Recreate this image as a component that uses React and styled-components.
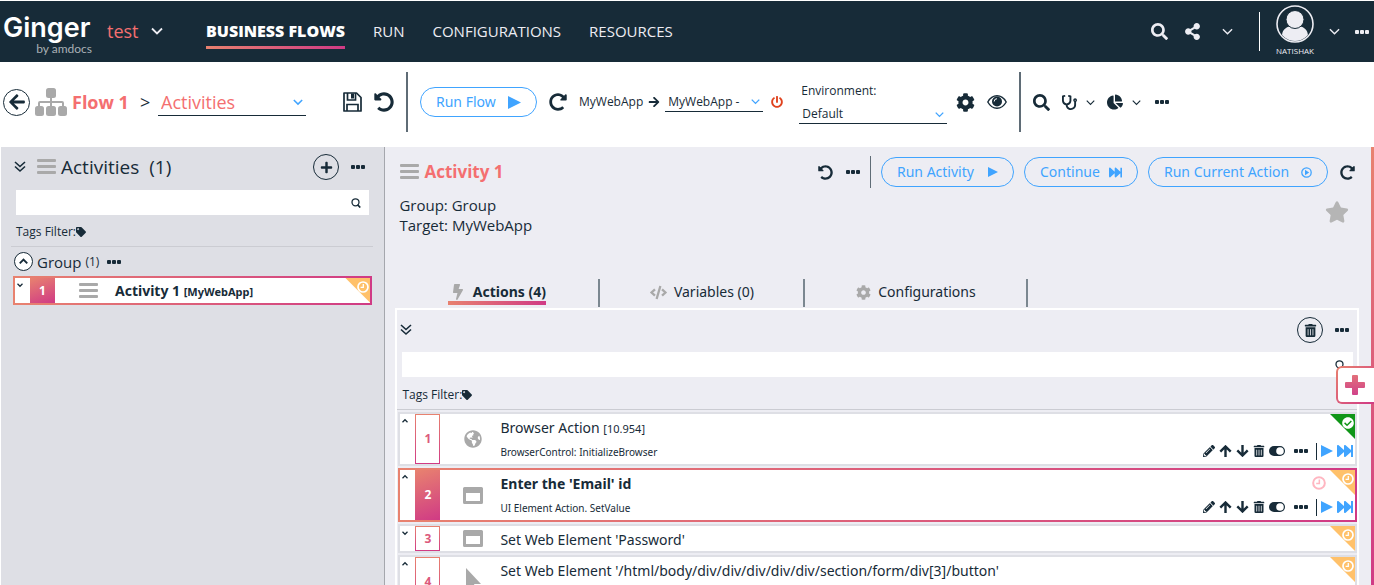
import React from "react";
import styled, { createGlobalStyle, css } from "styled-components";
import {
  FaArrowLeft, FaArrowRight, FaBolt, FaChartPie, FaCheckCircle, FaCode, FaCog,
  FaFastForward, FaGlobeAmericas, FaPencilAlt, FaPlus, FaPowerOff, FaRedoAlt,
  FaSearch, FaShareAlt, FaStar, FaStethoscope, FaTag, FaTrashAlt, FaUndoAlt,
} from "react-icons/fa";

const c = {
  navy: "#172b38",
  panel: "#dedfe5",
  page: "#ededf3",
  salmon: "#f46f70",
  blue: "#40a4ff",
  grey: "#a9a9a9",
  line: "#5f6c76",
  orange: "#ffc16a",
  green: "#109618",
};
const warm = "#e8826f, #d03a85";
const bodyFont = `"Noto Sans", "Open Sans", sans-serif`;

const GlobalStyle = createGlobalStyle`
  *, *::before, *::after { box-sizing: border-box; }
  body {
    margin: 0;
    background: #fff;
    color: ${c.navy};
    font-family: "Open Sans", "Noto Sans", sans-serif;
    font-size: 15px;
    line-height: 20px;
    overflow: hidden;
  }
  button, input, select { font: inherit; color: inherit; }
  h1, h2, h3, p, ul { margin: 0; padding: 0; list-style: none; }
  svg { display: block; flex: none; }
`;

/* Shared drawings */
const Chevron = ({ size = 11, up, weight = 1.5 }) => (
  <svg width={size} height={size} viewBox="0 0 12 12" fill="none" stroke="currentColor" strokeWidth={weight} aria-hidden="true">
    <path d={up ? "M1 8.5 6 3.5l5 5" : "M1 3.5l5 5 5-5"} />
  </svg>
);
const DoubleChevron = () => (
  <svg width="12" height="12" viewBox="0 0 12 12" fill="none" stroke="currentColor" strokeWidth="1.6" aria-hidden="true">
    <path d="M1 1l5 4.500L11 1M1 5.500l5 4.500 5-4.500" />
  </svg>
);
const BoldArrow = ({ down }) => (
  <svg width="13" height="12" viewBox="0 0 13 12" fill="none" stroke="currentColor" strokeWidth="2.400" aria-hidden="true">
    <path d={down ? "M6.500 0v10M1.300 5.300l5.200 5.200 5.200-5.200" : "M6.500 12V2M1.300 6.700l5.200-5.200 5.200 5.200"} />
  </svg>
);
const Dots = () => (
  <svg width="14" height="4" viewBox="0 0 14 4" fill="currentColor" aria-hidden="true">
    <rect width="4" height="4" rx="1" />
    <rect x="5" width="4" height="4" rx="1" />
    <rect x="10" width="4" height="4" rx="1" />
  </svg>
);
const Play = ({ size = 12 }) => (
  <svg width={size} height={size} viewBox="0 0 12 12" fill="currentColor" aria-hidden="true">
    <path d="M0 0l12 6L0 12z" />
  </svg>
);
const PlayRing = () => (
  <svg width="11" height="11" viewBox="0 0 11 11" aria-hidden="true">
    <circle cx="5.500" cy="5.500" r="4.700" fill="none" stroke="currentColor" strokeWidth="1.300" />
    <path d="M4 2.800l4.200 2.700L4 8.200z" fill="currentColor" />
  </svg>
);
const Bars = () => (
  <svg width="19" height="16" viewBox="0 0 19 16" fill={c.grey} aria-hidden="true">
    <rect width="19" height="3" rx="1" />
    <rect y="6" width="19" height="3" rx="1" />
    <rect y="12" width="19" height="3" rx="1" />
  </svg>
);
const Lens = () => (
  <svg width="10" height="10" viewBox="0 0 10 10" fill="none" stroke="currentColor" aria-hidden="true">
    <circle cx="4.500" cy="4.300" r="3.500" strokeWidth="1.300" />
    <path d="M6.500 6.700L9.300 9.500" strokeWidth="1.700" />
  </svg>
);
const Clock = ({ size = 12 }) => (
  <svg width={size} height={size} viewBox="0 0 12 12" fill="none" stroke="currentColor" aria-hidden="true">
    <circle cx="6" cy="6" r="5" strokeWidth="1.700" />
    <path d="M6.300 3v3.400H3.600" strokeWidth="1.300" />
  </svg>
);
const Hierarchy = () => (
  <svg width="32" height="28" viewBox="0 0 32 28" fill={c.grey} aria-hidden="true">
    <rect x="11" width="10" height="10" rx="2.500" />
    <rect y="18" width="9" height="10" rx="2.500" />
    <rect x="11" y="18" width="10" height="10" rx="2.500" />
    <rect x="23" y="18" width="9" height="10" rx="2.500" />
    <path d="M15 9h2v4h10a2 2 0 0 1 2 2v4h-2v-4H17v4h-2v-4H5v4H3v-4a2 2 0 0 1 2-2h10z" />
  </svg>
);
const Floppy = () => (
  <svg width="19" height="20" viewBox="0 0 19 20" fill="none" stroke="currentColor" strokeWidth="1.700" aria-hidden="true">
    <path d="M1 1h12.500L18 5.500V19H1z" strokeLinejoin="round" />
    <path d="M4 19v-6.500h11V19" />
    <path d="M4.500 1v7h8V1" />
    <path d="M8 1.500h3v5H8z" fill="currentColor" stroke="none" />
  </svg>
);
const Eye = () => (
  <svg width="20" height="16" viewBox="0 0 20 16" aria-hidden="true">
    <path d="M.8 8C3 4 6.300 1.800 10 1.800S17 4 19.200 8C17 12 13.700 14.200 10 14.200S3 12 .8 8z" fill="none" stroke="currentColor" strokeWidth="1.400" />
    <circle cx="10" cy="7.500" r="5" fill="currentColor" />
    <path d="M7.200 7.500A2.800 2.800 0 0 1 10 4.700" fill="none" stroke="#fff" />
  </svg>
);
const Toggle = () => (
  <svg width="16" height="12" viewBox="0 0 16 12" aria-hidden="true">
    <rect y="1" width="16" height="10" rx="5" fill="currentColor" />
    <circle cx="11" cy="6" r="3.800" fill="#fff" />
  </svg>
);
const WindowIcon = () => (
  <svg width="20" height="17" viewBox="0 0 20 17" fill={c.grey} aria-hidden="true">
    <path fillRule="evenodd" d="M1.500 0h17A1.500 1.500 0 0 1 20 1.500v14a1.500 1.500 0 0 1-1.500 1.500h-17A1.500 1.500 0 0 1 0 15.500v-14A1.500 1.500 0 0 1 1.500 0zM3 6v8h14V6z" />
  </svg>
);
const Pointer = () => (
  <svg width="20" height="28" viewBox="0 0 20 28" fill={c.grey} aria-hidden="true">
    <path d="M3 0l15 16h-7l4 9-4 2-4-9-4 4z" />
  </svg>
);
const Avatar = () => (
  <svg width="38" height="38" viewBox="0 0 38 38" aria-hidden="true">
    <clipPath id="avatar-clip"><circle cx="19" cy="19" r="17" /></clipPath>
    <g clipPath="url(#avatar-clip)" fill={c.page}>
      <path d="M6 38v-7c0-6 4-9 8-9.500 3 2 7 2 10 0 4 .5 8 3.500 8 9.500v7z" />
      <circle cx="19" cy="14.500" r="9" stroke={c.navy} strokeWidth="1" />
    </g>
    <circle cx="19" cy="19" r="18" fill="none" stroke={c.page} strokeWidth="1.600" />
  </svg>
);
const WarmPlus = () => (
  <svg width="20" height="20" viewBox="0 0 20 20" aria-hidden="true">
    <linearGradient id="plus-fill" x1="0" y1="0" x2="0" y2="1">
      <stop stopColor="#e2707a" />
      <stop offset="1" stopColor="#d0428a" />
    </linearGradient>
    <path fill="url(#plus-fill)" d="M8 0h4a1 1 0 0 1 1 1v6h6a1 1 0 0 1 1 1v4a1 1 0 0 1-1 1h-6v6a1 1 0 0 1-1 1H8a1 1 0 0 1-1-1v-6H1a1 1 0 0 1-1-1V8a1 1 0 0 1 1-1h6V1a1 1 0 0 1 1-1z" />
  </svg>
);

/* Shared controls */
const Page = styled.div`
  height: 100vh;
  display: flex;
  flex-direction: column;
`;
const Group = styled.div`
  display: flex;
  align-items: center;
  gap: ${(p) => p.$gap || 0}px;
  margin-left: ${(p) => p.$before || 0}px;
  ${(p) => p.$end && css`margin-left: auto;`}
`;
const IconButton = styled.button.attrs({ type: "button" })`
  display: flex;
  align-items: center;
  justify-content: center;
  flex: none;
  padding: 0;
  border: 0;
  background: none;
  color: ${(p) => p.$color || "inherit"};
  cursor: pointer;
`;
const RoundButton = styled(IconButton)`
  width: ${(p) => p.$size}px;
  height: ${(p) => p.$size}px;
  border: 1px solid ${c.navy};
  border-radius: 50%;
  background: ${(p) => p.$fill || "none"};
`;
const Divider = styled.span`
  flex: none;
  width: ${(p) => p.$width || 1}px;
  height: ${(p) => p.$height}px;
  background: ${(p) => p.$color || c.line};
`;
const Pill = styled.button.attrs({ type: "button" })`
  display: flex;
  align-items: center;
  justify-content: space-between;
  width: ${(p) => p.$width}px;
  height: 30px;
  padding: 0 15px;
  border: 1px solid ${c.blue};
  border-radius: 15px;
  background: none;
  font-family: ${bodyFont};
  font-size: 14px;
  color: ${c.blue};
  white-space: nowrap;
  cursor: pointer;
`;

/* Header */
const Header = styled.header`
  display: flex;
  align-items: center;
  flex: none;
  height: 62px;
  padding: 0 5px 0 3px;
  border-top: 1px solid #fff;
  background: ${c.navy};
  color: ${c.page};
`;
const Brand = styled.div`
  width: 89px;
  margin-right: 15px;
  padding-top: 4px;
`;
const BrandName = styled.div`
  font-family: Inter, sans-serif;
  font-size: 27px;
  line-height: 30px;
  font-weight: 600;
  color: #fff;
`;
const BrandBy = styled.div`
  font-family: Lato, sans-serif;
  font-size: 12px;
  line-height: 12px;
  text-align: right;
  color: #a9b0b5;
`;
const Solution = styled.button.attrs({ type: "button" })`
  display: flex;
  align-items: center;
  gap: 12px;
  width: 99px;
  padding: 0 0 2px;
  border: 0;
  background: none;
  font-size: 18px;
  text-align: left;
  color: ${c.salmon};
  svg { color: ${c.page}; }
`;
const Nav = styled.nav`
  display: flex;
  gap: 28px;
`;
const NavLink = styled.a`
  padding: 6px 0 5px;
  border-bottom: 3px solid transparent;
  border-image: ${(p) => (p.$active ? `linear-gradient(90deg, ${warm}) 1` : "none")};
  font-size: ${(p) => (p.$active ? 16 : 15)}px;
  font-weight: ${(p) => (p.$active ? 800 : 400)};
  color: ${(p) => (p.$active ? "#fff" : c.page)};
  text-decoration: none;
`;
const User = styled.div`
  display: flex;
  flex-direction: column;
  align-items: center;
  width: 38px;
  font-size: 8px;
  line-height: 15px;
`;

/* Toolbar */
const Toolbar = styled.div`
  display: flex;
  align-items: center;
  flex: none;
  height: 85px;
  padding: 0 3px 5px;
`;
const FlowName = styled.h1`
  width: 68px;
  font-size: 18px;
  line-height: 24px;
  color: ${c.salmon};
  white-space: nowrap;
`;
const Picker = styled.span`
  display: flex;
  align-items: center;
  width: ${(p) => p.$width}px;
  height: ${(p) => p.$height}px;
  padding: 0 3px;
  border-bottom: 1px solid ${c.navy};
  font-size: ${(p) => p.$font}px;
  color: ${(p) => p.$color || "inherit"};
  svg { color: ${c.blue}; }
`;
const Select = styled.select`
  appearance: none;
  flex: 1;
  min-width: 0;
  padding: 0;
  border: 0;
  background: none;
  text-overflow: clip;
`;
const Crumb = styled.span`
  width: 18px;
  font-size: 18px;
`;
const Small = styled.span`
  font-size: 12px;
  white-space: nowrap;
`;
const Field = styled.div`
  display: flex;
  flex-direction: column;
  gap: 5px;
  label {
    padding-left: 2px;
    font-size: 12px;
  }
`;

/* Work area */
const Work = styled.div`
  display: flex;
  flex: 1;
  min-height: 0;
  border-left: 1px solid #fff;
`;
const Side = styled.aside`
  flex: none;
  width: 28%;
  padding: 5px 11px 0 10px;
  border-right: 1px solid #a5a7ad;
  background: ${c.panel};
`;
const SideHead = styled.div`
  display: flex;
  align-items: center;
  gap: 11px;
  padding: 0 8px 0 3px;
  height: 30px;
`;
const SideTitle = styled.h2`
  display: flex;
  align-items: center;
  gap: 5px;
  font-size: 19px;
  line-height: 24px;
  font-weight: 400;
`;
const SearchBox = styled.div`
  display: flex;
  align-items: center;
  flex: none;
  height: 25px;
  margin: ${(p) => p.$margin};
  padding-right: 8px;
  background: #fff;
  input {
    flex: 1;
    min-width: 0;
    border: 0;
    background: none;
    outline: 0;
  }
`;
const Tags = styled.div`
  display: flex;
  align-items: center;
  flex: none;
  height: ${(p) => p.$height}px;
  padding: 3px 5px 0;
  border-bottom: 1px solid #cbccd2;
  font-size: 12px;
`;
const GroupHead = styled.div`
  display: flex;
  align-items: center;
  gap: 4px;
  height: 29px;
  padding: 0 3px;
  h3 { font-size: 15px; font-weight: 400; }
`;

/* Cards used by both lists */
const Card = styled.li`
  position: relative;
  display: flex;
  flex: none;
  height: ${(p) => (p.$short ? 29 : 54)}px;
  margin: ${(p) => p.$margin || "0"};
  border: 2px solid transparent;
  background: ${(p) =>
    `linear-gradient(#fff, #fff) padding-box, ${p.$selected ? `linear-gradient(90deg, ${warm})` : `linear-gradient(${c.panel}, ${c.panel})`} border-box`};
`;
const Expander = styled(IconButton)`
  width: 15px;
  align-items: flex-start;
  justify-content: flex-start;
  padding: 4px 0 0 2px;
`;
const Index = styled.span`
  display: flex;
  align-items: center;
  justify-content: center;
  flex: none;
  width: 25px;
  border: 1px solid transparent;
  font-size: 12px;
  font-weight: 700;
  color: ${(p) => (p.$filled ? "#fff" : "#dc5a7c")};
  background: ${(p) =>
    p.$filled
      ? `linear-gradient(160deg, ${warm}) border-box`
      : `linear-gradient(#fff, #fff) padding-box, linear-gradient(${warm}) border-box`};
`;
const Kind = styled.span`
  display: flex;
  align-items: center;
  justify-content: center;
  flex: none;
  width: 66px;
  color: ${c.grey};
`;
const Body = styled.div`
  display: flex;
  flex-direction: column;
  justify-content: ${(p) => (p.$short ? "center" : "space-between")};
  flex: 1;
  min-width: 0;
  margin-left: -6px;
  padding: ${(p) => (p.$short ? "2px 0 0" : "4px 0 2px")};
  font-family: ${bodyFont};
`;
const Name = styled.h3`
  font-size: 14px;
  font-weight: ${(p) => (p.$bold ? 700 : 400)};
  white-space: nowrap;
  small { font-size: 11px; }
`;
const Meta = styled.p`
  font-size: 10px;
`;
const Corner = styled.span`
  position: absolute;
  top: 0;
  right: 0;
  width: 25px;
  height: 25px;
  padding: 3px 1px;
  background: ${(p) => p.$color};
  clip-path: polygon(0 0, 100% 0, 100% 100%);
  color: #fff;
  svg { margin-left: auto; }
`;
const Tools = styled.div`
  display: flex;
  align-items: center;
  gap: 4px;
  height: 26px;
  padding-right: 2px;
`;
const Pending = styled.span`
  margin: 0 29px 4px 0;
  color: #ffb6c1;
`;
const Aside = styled.div`
  display: flex;
  flex-direction: column;
  justify-content: flex-end;
  align-items: flex-end;
`;

/* Activity page */
const Main = styled.main`
  position: relative;
  display: flex;
  flex-direction: column;
  flex: 1;
  min-width: 0;
  padding: 9px 12px 0 10px;
  border-right: 3px solid;
  border-image: linear-gradient(${warm}) 1;
  background: ${c.page};
`;
const MainHead = styled.div`
  display: flex;
  align-items: center;
  height: 32px;
  padding: 0 4px 0 5px;
`;
const ActivityName = styled.h2`
  display: flex;
  align-items: center;
  gap: 5px;
  padding-bottom: 1px;
  font-size: 17px;
  line-height: 24px;
  color: ${c.salmon};
`;
const Facts = styled.div`
  display: flex;
  justify-content: space-between;
  align-items: flex-start;
  padding: 7px 10px 44px 4px;
`;
const Favourite = styled(IconButton)`
  padding: 5px 0;
`;
const Tabs = styled.div`
  display: flex;
  flex: none;
  height: 28px;
`;
const Tab = styled.button.attrs({ type: "button", role: "tab" })`
  display: flex;
  justify-content: center;
  width: ${(p) => (p.$wide ? 223 : 205)}px;
  padding: 0;
  border: 0;
  border-right: 2px solid #7b8790;
  background: none;
  font-family: ${bodyFont};
  font-size: 14px;
  font-weight: ${(p) => (p["aria-selected"] ? 700 : 400)};
  svg { color: ${c.grey}; }
`;
const TabLabel = styled.span`
  display: flex;
  align-items: center;
  gap: 7px;
  height: 26px;
  padding: 4px 0 0 ${(p) => (p.$active ? 2 : 0)}px;
  border-bottom: 4px solid transparent;
  border-image: ${(p) => (p.$active ? `linear-gradient(90deg, ${warm}) 1` : "none")};
`;
const Panel = styled.section`
  display: flex;
  flex-direction: column;
  flex: 1;
  min-height: 0;
  margin-top: 1px;
  border: 2px solid #fff;
  border-bottom: 0;
`;
const PanelHead = styled.div`
  display: flex;
  align-items: center;
  flex: none;
  height: 40px;
  padding: 0 8px 0 3px;
`;
const List = styled.ul`
  display: flex;
  flex-direction: column;
  gap: 2px;
  flex: 1;
  min-height: 0;
  padding: 2px 0 0 1px;
  overflow: hidden;
`;
const AddTab = styled.button.attrs({ type: "button" })`
  position: absolute;
  top: 50%;
  right: -3px;
  display: flex;
  align-items: center;
  width: 38px;
  height: 38px;
  padding: 0 7px;
  border: 2px solid transparent;
  border-right: 0;
  border-radius: 6px 0 0 6px;
  background: linear-gradient(#fff, #fff) padding-box, linear-gradient(135deg, ${warm}) border-box;
`;

const actions = [
  { name: "Browser Action", note: "[10.954]", meta: "BrowserControl: InitializeBrowser", kind: <FaGlobeAmericas size={18} />, passed: true },
  { name: "Enter the 'Email' id", meta: "UI Element Action. SetValue", kind: <WindowIcon />, selected: true },
  { name: "Set Web Element 'Password'", kind: <WindowIcon />, short: true },
  { name: "Set Web Element '/html/body/div/div/div/div/div/section/form/div[3]/button'", kind: <Pointer /> },
];

const ActionTools = () => (
  <Tools>
    <IconButton aria-label="Edit"><FaPencilAlt size={12} /></IconButton>
    <IconButton aria-label="Move up"><BoldArrow /></IconButton>
    <IconButton aria-label="Move down"><BoldArrow down /></IconButton>
    <IconButton aria-label="Delete"><FaTrashAlt size={12} /></IconButton>
    <IconButton aria-label="Enable"><Toggle /></IconButton>
    <Group $gap={8} $before={5}>
      <IconButton aria-label="More"><Dots /></IconButton>
      <Divider $height={17} $color={c.navy} />
    </Group>
    <IconButton aria-label="Run" $color={c.blue}><Play /></IconButton>
    <IconButton aria-label="Run from here" $color={c.blue}><FaFastForward size={16} /></IconButton>
  </Tools>
);

const ActionRow = ({ action, index }) => (
  <Card $short={action.short} $selected={action.selected}>
    <Expander aria-label="Expand action"><Chevron size={6} up={!action.short} weight={2.5} /></Expander>
    <Index $filled={action.selected}>{index}</Index>
    <Kind>{action.kind}</Kind>
    <Body $short={action.short}>
      <Name $bold={action.selected}>{action.name} {action.note && <small>{action.note}</small>}</Name>
      {action.meta && <Meta>{action.meta}</Meta>}
    </Body>
    {!action.short && (
      <Aside>
        {action.selected && <Pending><Clock size={14} /></Pending>}
        <ActionTools />
      </Aside>
    )}
    <Corner $color={action.passed ? c.green : c.orange}>
      {action.passed ? <FaCheckCircle size={12} /> : <Clock />}
    </Corner>
  </Card>
);

export default function App() {
  return (
    <Page>
      <GlobalStyle />
      <Header>
        <Brand>
          <BrandName>Ginger</BrandName>
          <BrandBy>by amdocs</BrandBy>
        </Brand>
        <Solution>test <Chevron size={12} weight={1.8} /></Solution>
        <Nav>
          <NavLink href="#flows" $active>BUSINESS FLOWS</NavLink>
          <NavLink href="#run">RUN</NavLink>
          <NavLink href="#configurations">CONFIGURATIONS</NavLink>
          <NavLink href="#resources">RESOURCES</NavLink>
        </Nav>
        <Group $gap={16} $end>
          <IconButton aria-label="Search"><FaSearch size={17} /></IconButton>
          <IconButton aria-label="Share"><FaShareAlt size={17} /></IconButton>
          <Group $gap={26} $before={5}>
            <IconButton aria-label="Share options"><Chevron /></IconButton>
            <Divider $height={39} $color="#fff" />
          </Group>
          <Group $gap={15}>
            <User><Avatar />NATISHAK</User>
            <IconButton aria-label="User options"><Chevron /></IconButton>
            <IconButton aria-label="More"><Dots /></IconButton>
          </Group>
        </Group>
      </Header>

      <Toolbar>
        <Group $gap={5}>
          <RoundButton $size={27} aria-label="Back"><FaArrowLeft size={18} /></RoundButton>
          <Hierarchy />
          <FlowName>Flow 1</FlowName>
        </Group>
        <Crumb>&gt;</Crumb>
        <Picker $width={148} $height={27} $font={18} $color={c.salmon}>
          <Select aria-label="View"><option>Activities</option></Select>
          <Chevron size={10} weight={1.8} />
        </Picker>
        <Group $gap={12} $before={37}>
          <IconButton aria-label="Save"><Floppy /></IconButton>
          <IconButton aria-label="Undo"><FaUndoAlt size={20} /></IconButton>
          <Divider $height={60} $width={2} />
          <Pill $width={117}>Run Flow <Play size={13} /></Pill>
          <IconButton aria-label="Reset"><FaRedoAlt size={18} /></IconButton>
          <Group $gap={5}>
            <Small>MyWebApp</Small>
            <FaArrowRight size={12} />
            <Picker $width={98} $height={20} $font={12}>
              <Select aria-label="Agent"><option>MyWebApp - </option></Select>
              <Chevron size={9} weight={1.8} />
            </Picker>
          </Group>
        </Group>
        <Group $gap={16} $before={8}>
          <IconButton aria-label="Stop agent" $color="#e0431f"><FaPowerOff size={12} /></IconButton>
          <Field>
            <label htmlFor="environment">Environment:</label>
            <Picker $width={148} $height={18} $font={12}>
              <Select id="environment"><option>Default</option></Select>
              <Chevron size={9} weight={1.8} />
            </Picker>
          </Field>
        </Group>
        <Group $gap={12} $before={9}>
          <IconButton aria-label="Settings"><FaCog size={19} /></IconButton>
          <IconButton aria-label="View"><Eye /></IconButton>
          <Divider $height={60} $width={2} />
          <IconButton aria-label="Find"><FaSearch size={17} /></IconButton>
          <Group $gap={9}>
            <IconButton aria-label="Analyze"><FaStethoscope size={15} /></IconButton>
            <IconButton aria-label="Analyze options"><Chevron size={9} /></IconButton>
          </Group>
          <Group $gap={9}>
            <IconButton aria-label="Reports"><FaChartPie size={16} /></IconButton>
            <IconButton aria-label="Report options"><Chevron size={9} /></IconButton>
          </Group>
          <Group $before={2}>
            <IconButton aria-label="More"><Dots /></IconButton>
          </Group>
        </Group>
      </Toolbar>

      <Work>
        <Side>
          <SideHead>
            <IconButton aria-label="Expand all"><DoubleChevron /></IconButton>
            <SideTitle><Bars />Activities <span>&nbsp;(1)</span></SideTitle>
            <Group $gap={12} $end>
              <RoundButton $size={26} aria-label="Add activity"><FaPlus size={13} /></RoundButton>
              <IconButton aria-label="More"><Dots /></IconButton>
            </Group>
          </SideHead>
          <SearchBox $margin="8px 4px 0 5px">
            <input aria-label="Search activities" />
            <Lens />
          </SearchBox>
          <Tags $height={32}>Tags Filter:<FaTag size={10} /></Tags>
          <GroupHead>
            <RoundButton $size={19} $fill="#fff" aria-label="Collapse group"><Chevron size={9} up weight={2.5} /></RoundButton>
            <h3>Group</h3>
            <Small>(1)</Small>
            <Group $before={4}>
              <IconButton aria-label="More"><Dots /></IconButton>
            </Group>
          </GroupHead>
          <ul>
            <Card $short $selected $margin="0 1px 0 2px">
              <Expander aria-label="Expand activity"><Chevron size={6} weight={2.5} /></Expander>
              <Index $filled>1</Index>
              <Kind><Bars /></Kind>
              <Body $short><Name $bold>Activity 1 <small>[MyWebApp]</small></Name></Body>
              <Corner $color={c.orange}><Clock /></Corner>
            </Card>
          </ul>
        </Side>

        <Main>
          <MainHead>
            <ActivityName><Bars />Activity 1</ActivityName>
            <Group $gap={10} $end>
              <Group $gap={13}>
                <IconButton aria-label="Undo"><FaUndoAlt size={15} /></IconButton>
                <IconButton aria-label="More"><Dots /></IconButton>
              </Group>
              <Divider $height={32} />
              <Pill $width={133}>Run Activity <Play size={10} /></Pill>
              <Pill $width={114}>Continue <FaFastForward size={13} /></Pill>
              <Pill $width={180}>Run Current Action <PlayRing /></Pill>
              <Group $before={2}>
                <IconButton aria-label="Reset"><FaRedoAlt size={15} /></IconButton>
              </Group>
            </Group>
          </MainHead>
          <Facts>
            <div>
              <p>Group: Group</p>
              <p>Target: MyWebApp</p>
            </div>
            <Favourite aria-label="Favourite" $color="#b5b5b5"><FaStar size={24} /></Favourite>
          </Facts>
          <Tabs role="tablist">
            <Tab aria-selected={true}><TabLabel $active><FaBolt size={16} />Actions (4)</TabLabel></Tab>
            <Tab aria-selected={false}><TabLabel><FaCode size={17} />Variables (0)</TabLabel></Tab>
            <Tab aria-selected={false} $wide><TabLabel><FaCog size={15} />Configurations</TabLabel></Tab>
          </Tabs>
          <Panel>
            <PanelHead>
              <IconButton aria-label="Expand all"><DoubleChevron /></IconButton>
              <Group $gap={12} $end>
                <RoundButton $size={26} aria-label="Delete all"><FaTrashAlt size={13} /></RoundButton>
                <IconButton aria-label="More"><Dots /></IconButton>
              </Group>
            </PanelHead>
            <SearchBox $margin="2px 4px 0 5px">
              <input aria-label="Search actions" />
              <Lens />
            </SearchBox>
            <Tags $height={33}>Tags Filter:<FaTag size={10} /></Tags>
            <List>
              {actions.map((action, i) => <ActionRow key={action.name} action={action} index={i + 1} />)}
            </List>
          </Panel>
          <AddTab aria-label="Add action"><WarmPlus /></AddTab>
        </Main>
      </Work>
    </Page>
  );
}
